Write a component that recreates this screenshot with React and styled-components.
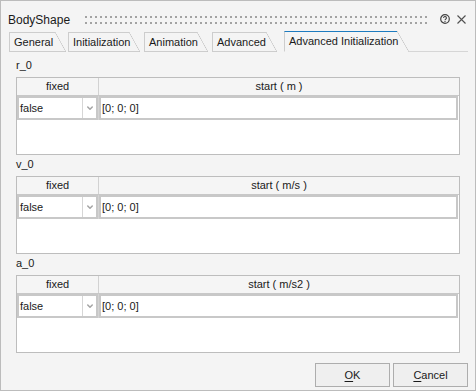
import React from "react";
import styled, { createGlobalStyle } from "styled-components";

const GlobalStyle = createGlobalStyle`
  html, body { margin: 0; padding: 0; background: #f4f4f4; }
  body { font-family: "Liberation Sans", Arial, sans-serif; }
`;

const Window = styled.div`
  width: 476px;
  height: 391px;
  box-sizing: border-box;
  border: 1px solid #bcbcbc;
  background: #f4f4f4;
  display: flex;
  flex-direction: column;
  color: #1a1a1a;
  font-family: "Liberation Sans", Arial, sans-serif;
  overflow: hidden;
`;

const TitleBar = styled.div`
  height: 30px;
  box-sizing: border-box;
  display: flex;
  align-items: flex-start;
  padding: 12px 9px 0 7px;
`;

const Title = styled.span`
  font-size: 12px;
  line-height: 14px;
  white-space: nowrap;
`;

const Grip = styled.div`
  flex: 1;
  height: 8px;
  margin: 3px 10px 0 15px;
  background-image: linear-gradient(to right, #a3a3a3 2px, transparent 2px),
    linear-gradient(to right, #a3a3a3 2px, transparent 2px);
  background-size: 5px 2px, 5px 2px;
  background-position: 0 0, 0 6px;
  background-repeat: repeat-x;
`;

const IconButton = styled.span`
  display: flex;
  margin-left: ${(p) => p.$ml || 0}px;
  margin-top: ${(p) => p.$mt || 0}px;
`;

const TabStrip = styled.div`
  display: flex;
  align-items: flex-end;
  height: 21px;
  padding: 0 7px 0 8px;
  font-size: 11px;
`;

const Tab = styled.div`
  position: relative;
  box-sizing: border-box;
  width: ${(p) => p.$w}px;
  margin-left: ${(p) => p.$ml}px;
  height: ${(p) => (p.$active ? 21 : 20)}px;
  border-left: 1px solid #cdcdcd;
  border-top: 1px solid ${(p) => (p.$active ? "#1d7bbf" : "#cdcdcd")};
  border-bottom: 1px solid ${(p) => (p.$active ? "transparent" : "#cdcdcd")};
  padding-left: 4px;
  line-height: 18px;
  white-space: nowrap;
  color: #1a1a1a;

  &::after {
    content: "";
    position: absolute;
    left: 100%;
    top: -1px;
    bottom: -1px;
    width: ${(p) => (p.$active ? 12 : 11)}px;
    background: linear-gradient(
        to top right,
        transparent calc(50% - 0.6px),
        #c4c4c4 50%,
        transparent calc(50% + 0.6px)
      )${(p) => (p.$active ? "" : ", linear-gradient(#cdcdcd, #cdcdcd) left bottom / 100% 1px no-repeat")};
  }
`;

const TabFiller = styled.div`
  flex: 1;
  margin-left: 12px;
  border-bottom: 1px solid #d6d6d6;
`;

const Content = styled.div`
  display: flex;
  flex-direction: column;
  gap: 3px;
  padding: 7px 15px 0;
`;

const Section = styled.section`
  display: flex;
  flex-direction: column;
`;

const Label = styled.div`
  font-size: 11px;
  line-height: 13px;
  margin-bottom: 5px;
`;

const Table = styled.div`
  height: 78px;
  box-sizing: border-box;
  border: 1px solid #bdbdbd;
  background: #fff;
  display: flex;
  flex-direction: column;
`;

const HeaderRow = styled.div`
  display: grid;
  grid-template-columns: 81px 1fr;
  height: 18px;
  box-sizing: border-box;
  border-bottom: 1px solid #c8c8c8;
  background: #f5f5f5;
  font-size: 11px;
`;

const HeaderCell = styled.div`
  display: flex;
  align-items: center;
  justify-content: center;
  line-height: 17px;
  color: #1a1a1a;
  & + & {
    border-left: 1px solid #d2d2d2;
  }
`;

const EditRow = styled.div`
  display: flex;
  height: 24px;
  font-size: 11px;
`;

const SelectBox = styled.div`
  width: 81px;
  box-sizing: border-box;
  border: 2px solid #c8c8c8;
  display: flex;
  background: #fff;
`;

const SelectText = styled.span`
  flex: 1;
  padding-left: 1px;
  line-height: 20px;
`;

const DropButton = styled.span`
  width: 14px;
  box-sizing: border-box;
  border-left: 1px solid #d6d6d6;
  display: flex;
  align-items: center;
  justify-content: center;
`;

const ColumnRule = styled.span`
  width: 1px;
  background: #d4d4d4;
`;

const ValueBox = styled.div`
  flex: 1;
  box-sizing: border-box;
  border: 2px solid #c8c8c8;
  margin-right: 1px;
  padding-left: 1px;
  line-height: 20px;
`;

const Footer = styled.div`
  display: flex;
  justify-content: flex-end;
  gap: 3px;
  margin-top: 10px;
  padding-right: 7px;
`;

const Button = styled.button`
  width: 75px;
  height: 24px;
  box-sizing: border-box;
  border: 1px solid #adadad;
  background: #efefef;
  font-family: "Liberation Sans", Arial, sans-serif;
  font-size: 11px;
  color: #1a1a1a;
  padding: 0;
  u { text-decoration-thickness: 1px; text-underline-offset: 2px; }
`;

const HelpIcon = () => (
  <svg width="10" height="10" viewBox="0 0 10 10">
    <circle cx="5" cy="5" r="4.3" fill="none" stroke="#444" strokeWidth="1.2" />
    <path d="M3.6 4 A1.4 1.4 0 1 1 5.6 5.2 C5.1 5.5 5 5.8 5 6.3" fill="none" stroke="#444" strokeWidth="1.1" />
    <rect x="4.45" y="7" width="1.1" height="1.1" fill="#444" />
  </svg>
);

const CloseIcon = () => (
  <svg width="9" height="9" viewBox="0 0 9 9">
    <path d="M0.5 0.5 L8.5 8.5 M8.5 0.5 L0.5 8.5" stroke="#505050" strokeWidth="1.1" />
  </svg>
);

const Chevron = () => (
  <svg width="6" height="4" viewBox="0 0 6 4">
    <path d="M0.3 0.6 L3 3.3 L5.7 0.6" fill="none" stroke="#a4a4a4" strokeWidth="1.4" />
  </svg>
);

const tabs = [
  { label: "General", w: 46, ml: 0 },
  { label: "Initialization", w: 61, ml: 13 },
  { label: "Animation", w: 53, ml: 15 },
  { label: "Advanced", w: 54, ml: 15 },
  { label: "Advanced Initialization", w: 113, ml: 18, active: true },
];

const sections = [
  { name: "r_0", unit: "m" },
  { name: "v_0", unit: "m/s" },
  { name: "a_0", unit: "m/s2" },
];

export default function App() {
  return (
    <>
      <GlobalStyle />
      <Window>
        <TitleBar>
          <Title>BodyShape</Title>
          <Grip />
          <IconButton $mt={1}>
            <HelpIcon />
          </IconButton>
          <IconButton $ml={7} $mt={2}>
            <CloseIcon />
          </IconButton>
        </TitleBar>
        <TabStrip>
          {tabs.map((t) => (
            <Tab key={t.label} $w={t.w} $ml={t.ml} $active={t.active}>
              {t.label}
            </Tab>
          ))}
          <TabFiller />
        </TabStrip>
        <Content>
          {sections.map((s) => (
            <Section key={s.name}>
              <Label>{s.name}</Label>
              <Table>
                <HeaderRow>
                  <HeaderCell>fixed</HeaderCell>
                  <HeaderCell>start ( {s.unit} )</HeaderCell>
                </HeaderRow>
                <EditRow>
                  <SelectBox>
                    <SelectText>false</SelectText>
                    <DropButton>
                      <Chevron />
                    </DropButton>
                  </SelectBox>
                  <ColumnRule />
                  <ValueBox>[0; 0; 0]</ValueBox>
                </EditRow>
              </Table>
            </Section>
          ))}
        </Content>
        <Footer>
          <Button>
            <u>O</u>K
          </Button>
          <Button>
            <u>C</u>ancel
          </Button>
        </Footer>
      </Window>
    </>
  );
}
